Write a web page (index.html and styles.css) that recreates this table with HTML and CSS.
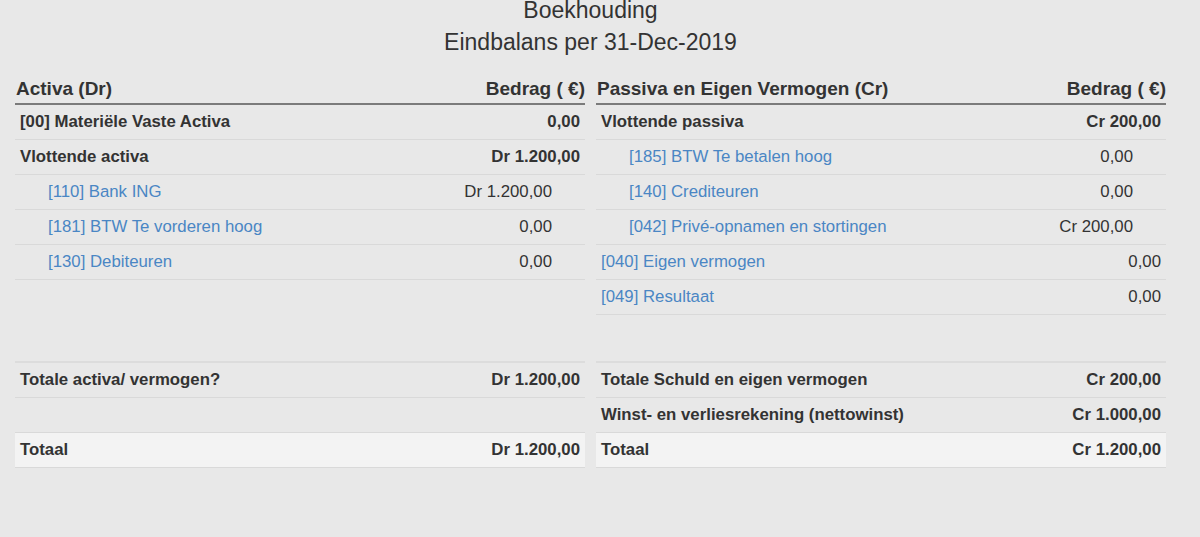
FILE: index.html
```html
<!DOCTYPE html>
<html lang="nl">
<head>
  <meta charset="UTF-8">
  <title>Eindbalans</title>
  <link rel="stylesheet" href="styles.css">
</head>
<body>
  <div class="page">
    <div class="titles">
      <h1>Boekhouding</h1>
      <h2>Eindbalans per 31-Dec-2019</h2>
    </div>

    <div class="cols">
      <table class="balans">
        <thead>
          <tr><th>Activa (Dr)</th><th class="num">Bedrag ( €)</th></tr>
        </thead>
        <tbody>
          <tr class="group"><td>[00] Materiële Vaste Activa</td><td class="num">0,00</td></tr>
          <tr class="group"><td>Vlottende activa</td><td class="num">Dr 1.200,00</td></tr>
          <tr class="sub"><td><a href="#">[110] Bank ING</a></td><td class="num">Dr 1.200,00</td></tr>
          <tr class="sub"><td><a href="#">[181] BTW Te vorderen hoog</a></td><td class="num">0,00</td></tr>
          <tr class="sub"><td><a href="#">[130] Debiteuren</a></td><td class="num">0,00</td></tr>
        </tbody>
      </table>

      <table class="balans">
        <thead>
          <tr><th>Passiva en Eigen Vermogen (Cr)</th><th class="num">Bedrag ( €)</th></tr>
        </thead>
        <tbody>
          <tr class="group"><td>Vlottende passiva</td><td class="num">Cr 200,00</td></tr>
          <tr class="sub"><td><a href="#">[185] BTW Te betalen hoog</a></td><td class="num">0,00</td></tr>
          <tr class="sub"><td><a href="#">[140] Crediteuren</a></td><td class="num">0,00</td></tr>
          <tr class="sub"><td><a href="#">[042] Privé-opnamen en stortingen</a></td><td class="num">Cr 200,00</td></tr>
          <tr><td><a href="#">[040] Eigen vermogen</a></td><td class="num">0,00</td></tr>
          <tr><td><a href="#">[049] Resultaat</a></td><td class="num">0,00</td></tr>
        </tbody>
      </table>
    </div>

    <div class="cols totals">
      <table class="balans">
        <tbody>
          <tr class="group"><td>Totale activa/ vermogen?</td><td class="num">Dr 1.200,00</td></tr>
          <tr class="group"><td>&nbsp;</td><td class="num"></td></tr>
          <tr class="group total"><td>Totaal</td><td class="num">Dr 1.200,00</td></tr>
        </tbody>
      </table>

      <table class="balans">
        <tbody>
          <tr class="group"><td>Totale Schuld en eigen vermogen</td><td class="num">Cr 200,00</td></tr>
          <tr class="group"><td>Winst- en verliesrekening (nettowinst)</td><td class="num">Cr 1.000,00</td></tr>
          <tr class="group total"><td>Totaal</td><td class="num">Cr 1.200,00</td></tr>
        </tbody>
      </table>
    </div>
  </div>
</body>
</html>
```

FILE: styles.css
```css
body {
  margin: 0;
  background-color: #e8e8e8;
  color: #333;
  font-family: "Liberation Sans", Arial, sans-serif;
  font-size: 16.8px;
}
.page {
  width: 1151px;
  padding-left: 15px;
}
.titles {
  text-align: center;
}
.titles h1,
.titles h2 {
  margin: 0;
  font-size: 23px;
  font-weight: normal;
}
.titles h1 {
  line-height: 20px;
}
.titles h2 {
  line-height: 33px;
  margin-top: 6px;
}
.cols {
  display: grid;
  grid-template-columns: 570px 570px;
  column-gap: 11px;
  align-items: start;
  margin-top: 16px;
}
.totals {
  margin-top: 46px;
}
.balans {
  width: 100%;
  border-collapse: collapse;
}
.balans th {
  text-align: left;
  font-size: 19px;
  line-height: 24px;
  padding: 2px 0 2px 1px;
  border-bottom: 2px solid #7b7b7b;
}
.balans th.num {
  text-align: right;
  padding-right: 0;
}
.balans td {
  line-height: 24px;
  padding: 5px;
  border-bottom: 1px solid #d9d9d9;
}
.totals .balans {
  border-top: 2px solid #dcdcdc;
}
.num {
  text-align: right;
  white-space: nowrap;
}
.group td {
  font-weight: bold;
}
.sub td:first-child {
  padding-left: 33px;
}
.sub td.num {
  padding-right: 33px;
}
.total td {
  background-color: #f3f3f3;
}
a {
  color: #4a86c4;
  text-decoration: none;
}
```
